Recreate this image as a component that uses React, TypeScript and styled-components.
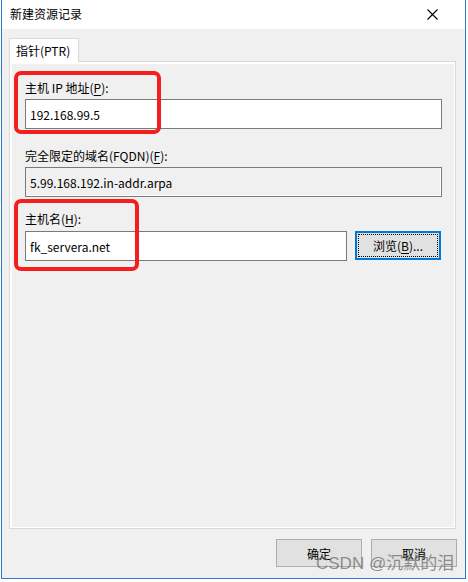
import styled, { createGlobalStyle } from 'styled-components';

const GlobalStyle = createGlobalStyle`
  html, body {
    margin: 0;
    padding: 0;
    background: #ffffff;
  }
  body {
    font-family: 'Microsoft YaHei', 'Noto Sans CJK SC', sans-serif;
    font-size: 12px;
    color: #000000;
  }
`;

export default function App() {
  return (
    <Page>
      <GlobalStyle />
      <Window>
        <TitleBar>
          <TitleText>新建资源记录</TitleText>
          <CloseButton>
            <svg width="11" height="11" viewBox="0 0 11 11">
              <path d="M0.5 0.5 L10.5 10.5 M10.5 0.5 L0.5 10.5" stroke="#000" strokeWidth="1.1" />
            </svg>
          </CloseButton>
        </TitleBar>

        <Body>
          <TabStrip>
            <Tab>指针(PTR)</Tab>
          </TabStrip>

          <TabPanel>
            <Field>
              <Label>主机 IP 地址(<u>P</u>):</Label>
              <TextBox>192.168.99.5</TextBox>
            </Field>

            <Field $gap={19}>
              <Label>完全限定的域名(FQDN)(<u>F</u>):</Label>
              <TextBox $readOnly>5.99.168.192.in-addr.arpa</TextBox>
            </Field>

            <Field $gap={14}>
              <Label $after={4}>主机名(<u>H</u>):</Label>
              <Row>
                <TextBox $width={322}>fk_servera.net</TextBox>
                <BrowseButton>
                  <FocusRect>浏览(<u>B</u>)...</FocusRect>
                </BrowseButton>
              </Row>
            </Field>

            <Highlight $left={4} $top={9} $width={147} $height={63} />
            <Highlight $left={4} $top={137} $width={125} $height={72} />
          </TabPanel>

          <Footer>
            <DialogButton>确定</DialogButton>
            <DialogButton>取消</DialogButton>
          </Footer>
        </Body>
      </Window>
      <Watermark>CSDN @沉默的泪</Watermark>
    </Page>
  );
}

const Page = styled.div`
  position: relative;
  width: 468px;
  height: 582px;
  overflow: hidden;
  background: #ffffff;
`;

const Window = styled.div`
  margin-left: 1px;
  width: 463px;
  height: 578px;
  display: flex;
  flex-direction: column;
  border: 1px solid #2a7bd3;
  border-top: none;
  background: #f0f0f0;
`;

const TitleBar = styled.div`
  height: 29px;
  flex-shrink: 0;
  display: flex;
  align-items: center;
  justify-content: space-between;
  padding: 0 0 0 8px;
  background: #ffffff;
`;

const TitleText = styled.span`
  font-size: 12px;
  line-height: 16px;
  color: #000000;
  margin-top: -2px;
`;

const CloseButton = styled.div`
  width: 46px;
  height: 29px;
  display: flex;
  align-items: center;
  justify-content: center;
  margin-right: 10px;
  margin-top: -1px;
`;

const Body = styled.div`
  flex: 1;
  display: flex;
  flex-direction: column;
  padding: 9px 8px 0 7px;
`;

const TabStrip = styled.div`
  display: flex;
  position: relative;
  z-index: 1;
  margin-bottom: -1px;
`;

const Tab = styled.div`
  width: 68px;
  height: 24px;
  display: flex;
  align-items: center;
  padding-left: 6px;
  box-sizing: border-box;
  width: 70px;
  background: #ffffff;
  border: 1px solid #d9d9d9;
  border-bottom: none;
  font-size: 12px;
`;

const TabPanel = styled.div`
  position: relative;
  width: 447px;
  height: 468px;
  box-sizing: border-box;
  border: 1px solid #d9d9d9;
  box-shadow: inset 2px 2px 0 #ffffff, inset -1px -1px 0 #ffffff;
  padding: 18px 13px 0 15px;
  display: flex;
  flex-direction: column;
`;

const Field = styled.div<{ $gap?: number }>`
  display: flex;
  flex-direction: column;
  margin-top: ${(p) => p.$gap ?? 0}px;
`;

const Label = styled.div<{ $after?: number }>`
  line-height: 16px;
  height: 16px;
  font-size: 12px;
  margin-bottom: ${(p) => p.$after ?? 3}px;

  u {
    text-underline-offset: 2px;
  }
`;

const TextBox = styled.div<{ $readOnly?: boolean; $width?: number }>`
  width: ${(p) => p.$width ?? 417}px;
  height: 30px;
  box-sizing: border-box;
  display: flex;
  align-items: center;
  padding-left: 4px;
  border: 1px solid #7a7a7a;
  background: ${(p) => (p.$readOnly ? '#f0f0f0' : '#ffffff')};
  box-shadow: ${(p) => (p.$readOnly ? 'inset -1px -1px 0 #ffffff' : 'none')};
  font-size: 12px;
  color: #000000;
`;

const Row = styled.div`
  display: flex;
  align-items: flex-start;
  gap: 8px;
`;

const BrowseButton = styled.div`
  width: 86px;
  height: 29px;
  box-sizing: border-box;
  border: 2px solid #0078d7;
  background: #e1e1e1;
  padding: 1px;
  display: flex;
`;

const FocusRect = styled.div`
  flex: 1;
  display: flex;
  align-items: center;
  justify-content: center;
  border: 1px dotted #000000;
  font-size: 12px;

  u {
    text-underline-offset: 2px;
  }
`;

const Highlight = styled.div<{ $left: number; $top: number; $width: number; $height: number }>`
  position: absolute;
  left: ${(p) => p.$left}px;
  top: ${(p) => p.$top}px;
  width: ${(p) => p.$width}px;
  height: ${(p) => p.$height}px;
  box-sizing: border-box;
  border: 4px solid #f31e1e;
  border-radius: 7px;
  pointer-events: none;
`;

const Footer = styled.div`
  display: flex;
  justify-content: flex-end;
  gap: 9px;
  padding-top: 10px;
  padding-right: 0;
`;

const DialogButton = styled.div`
  width: 86px;
  height: 28px;
  box-sizing: border-box;
  border: 1px solid #adadad;
  background: #e1e1e1;
  display: flex;
  align-items: center;
  justify-content: center;
  font-size: 12px;
`;

const Watermark = styled.div`
  position: absolute;
  left: 316px;
  top: 553px;
  font-family: 'Liberation Sans', 'Noto Sans CJK SC', sans-serif;
  font-size: 17px;
  line-height: 22px;
  color: rgba(110, 110, 110, 0.75);
  white-space: nowrap;
  pointer-events: none;
`;
